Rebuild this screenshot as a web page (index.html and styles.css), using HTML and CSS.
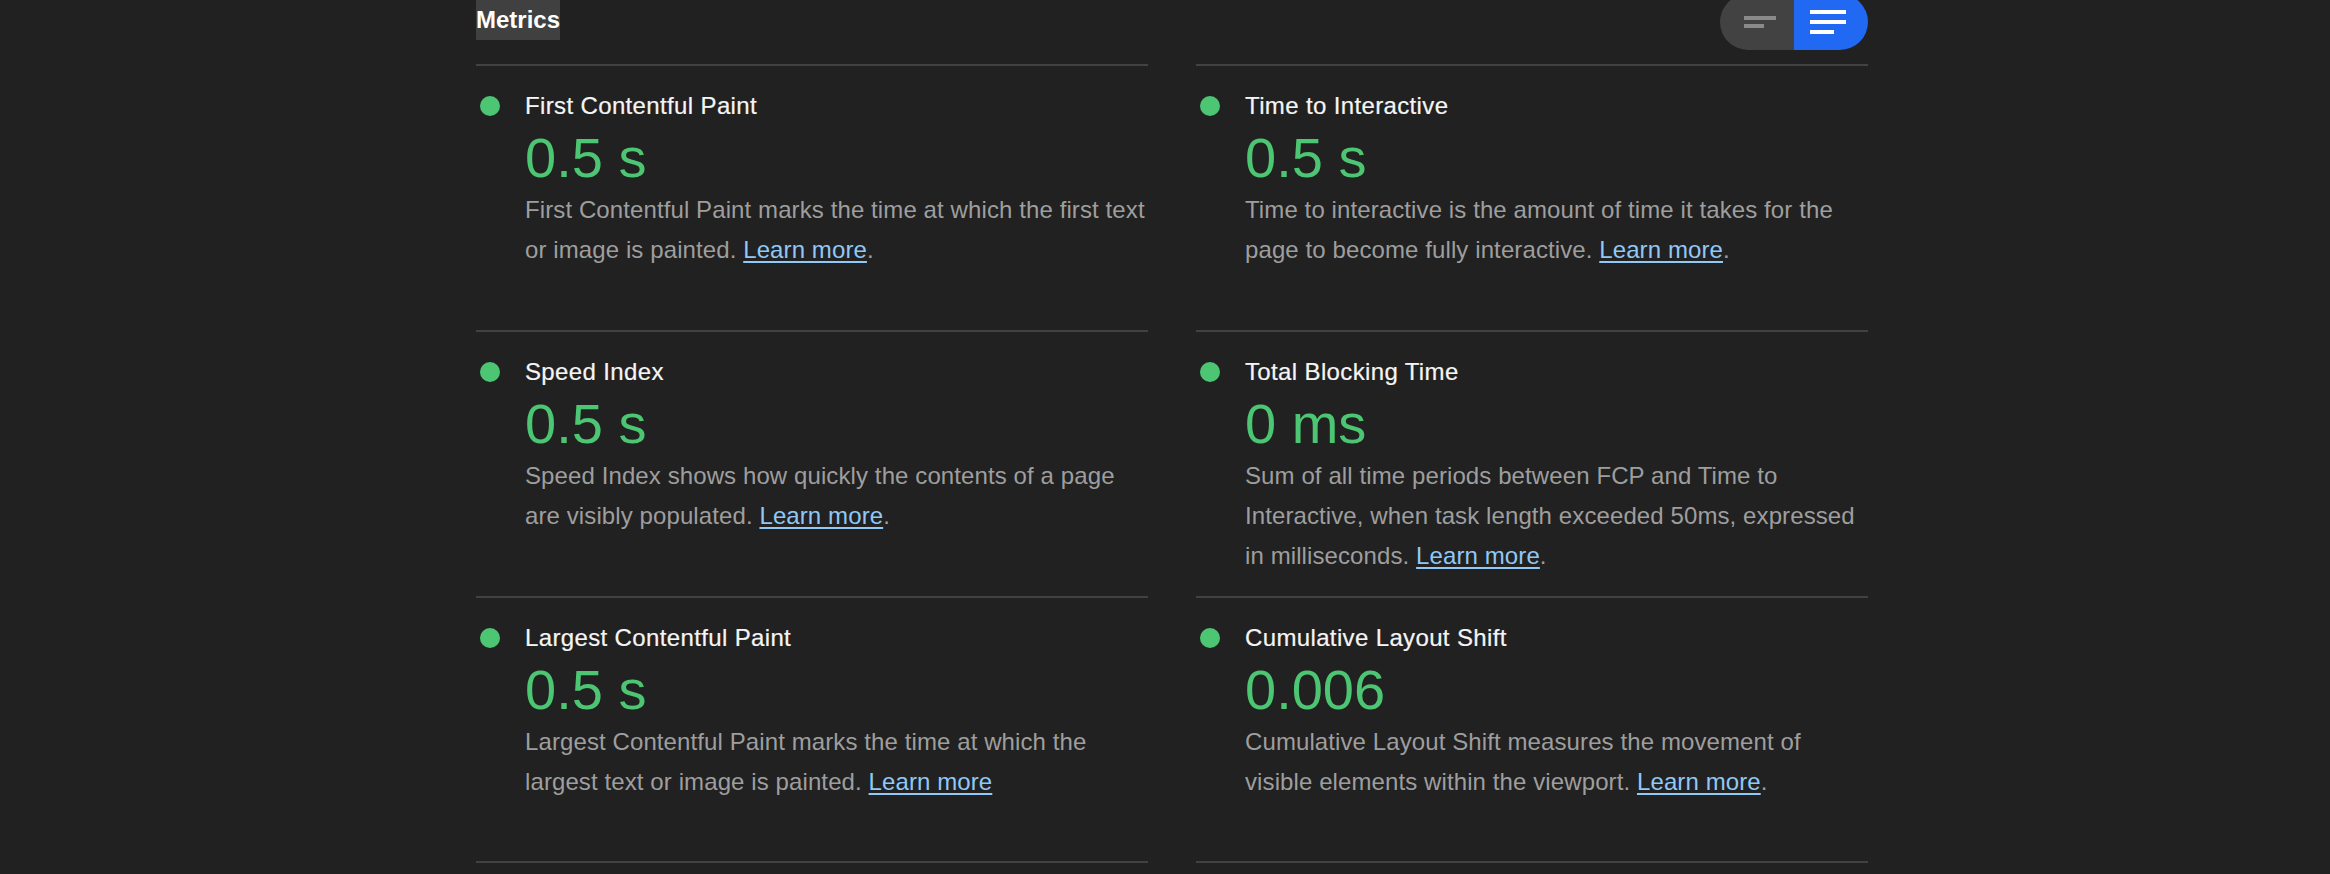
FILE: index.html
```html
<!DOCTYPE html>
<html lang="en">
<head>
<meta charset="utf-8">
<title>Metrics</title>
<link rel="stylesheet" href="styles.css">
</head>
<body>
<div class="report">
  <div class="header">
    <span class="section-title">Metrics</span>
    <div class="toggle">
      <span class="toggle__half toggle__half--off">
        <svg width="74" height="56" viewBox="0 0 74 56"><rect x="24" y="22" width="32" height="4" fill="#8a8a8a"/><rect x="24" y="30" width="20" height="4" fill="#8a8a8a"/></svg>
      </span>
      <span class="toggle__half toggle__half--on">
        <svg width="74" height="56" viewBox="0 0 74 56"><rect x="16" y="16" width="36" height="4" fill="#fff"/><rect x="16" y="26" width="36" height="4" fill="#fff"/><rect x="16" y="36" width="24" height="4" fill="#fff"/></svg>
      </span>
    </div>
  </div>
  <div class="metrics">
    <div class="metric">
      <span class="metric__dot"></span>
      <div class="metric__body">
        <div class="metric__title">First Contentful Paint</div>
        <div class="metric__value">0.5 s</div>
        <p class="metric__desc">First Contentful Paint marks the time at which the first text or image is painted. <a href="#">Learn more</a>.</p>
      </div>
    </div>
    <div class="metric">
      <span class="metric__dot"></span>
      <div class="metric__body">
        <div class="metric__title">Time to Interactive</div>
        <div class="metric__value">0.5 s</div>
        <p class="metric__desc">Time to interactive is the amount of time it takes for the page to become fully interactive. <a href="#">Learn more</a>.</p>
      </div>
    </div>
    <div class="metric">
      <span class="metric__dot"></span>
      <div class="metric__body">
        <div class="metric__title">Speed Index</div>
        <div class="metric__value">0.5 s</div>
        <p class="metric__desc">Speed Index shows how quickly the contents of a page are visibly populated. <a href="#">Learn more</a>.</p>
      </div>
    </div>
    <div class="metric">
      <span class="metric__dot"></span>
      <div class="metric__body">
        <div class="metric__title">Total Blocking Time</div>
        <div class="metric__value">0 ms</div>
        <p class="metric__desc">Sum of all time periods between FCP and Time to Interactive, when task length exceeded 50ms, expressed in milliseconds. <a href="#">Learn more</a>.</p>
      </div>
    </div>
    <div class="metric metric--last">
      <span class="metric__dot"></span>
      <div class="metric__body">
        <div class="metric__title">Largest Contentful Paint</div>
        <div class="metric__value">0.5 s</div>
        <p class="metric__desc">Largest Contentful Paint marks the time at which the largest text or image is painted. <a href="#">Learn more</a></p>
      </div>
    </div>
    <div class="metric metric--last">
      <span class="metric__dot"></span>
      <div class="metric__body">
        <div class="metric__title">Cumulative Layout Shift</div>
        <div class="metric__value">0.006</div>
        <p class="metric__desc">Cumulative Layout Shift measures the movement of visible elements within the viewport. <a href="#">Learn more</a>.</p>
      </div>
    </div>
  </div>
</div>
</body>
</html>
```

FILE: styles.css
```css
html, body {
  margin: 0;
  padding: 0;
  background: #212121;
}

body {
  font-family: "Liberation Sans", Arial, Helvetica, sans-serif;
  color: #f5f5f5;
  overflow: hidden;
}

.report {
  width: 1392px;
  margin: -6px 0 0 476px;
}

.header {
  display: flex;
  justify-content: space-between;
  align-items: flex-start;
  height: 56px;
  margin-bottom: 14px;
}

.section-title {
  margin-top: 6px;
  font-size: 24px;
  font-weight: 700;
  line-height: 40px;
  color: #ffffff;
  background: #404040;
}

.toggle {
  display: flex;
  width: 148px;
  height: 56px;
  border-radius: 28px;
  overflow: hidden;
}

.toggle__half {
  display: flex;
  flex: 1;
}

.toggle__half--off {
  background: #424242;
}

.toggle__half--on {
  background: #2168f2;
}

.metrics {
  display: grid;
  grid-template-columns: 672px 672px;
  column-gap: 48px;
}

.metric {
  display: grid;
  grid-template-columns: 49px 623px;
  align-items: start;
  box-sizing: border-box;
  min-height: 266px;
  padding: 20px 0;
  border-top: 2px solid #424242;
}

.metric--last {
  min-height: 267px;
  border-bottom: 2px solid #424242;
}

.metric__dot {
  width: 20px;
  height: 20px;
  margin: 10px 0 0 4px;
  border-radius: 50%;
  background: #4cc672;
}

.metric__title {
  font-size: 24px;
  line-height: 40px;
  letter-spacing: 0.36px;
  color: #f5f5f5;
  -webkit-text-stroke: 0.2px #f5f5f5;
}

.metric__value {
  font-size: 56px;
  line-height: 64px;
  color: #4cc672;
}

.metric__desc {
  margin: 0;
  font-size: 24px;
  line-height: 40px;
  letter-spacing: 0.1px;
  color: #9e9e9e;
}

.metric__desc a {
  color: #90c8f6;
  text-decoration: underline;
  text-underline-offset: 3px;
}
```
